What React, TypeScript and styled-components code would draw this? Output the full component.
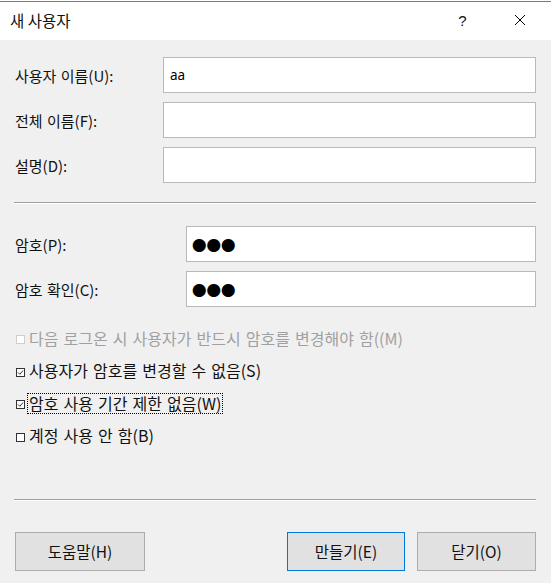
import styled, { createGlobalStyle } from "styled-components";

const Global = createGlobalStyle`
  html, body {
    margin: 0;
    padding: 0;
    background: #f0f0f0;
  }
  body {
    font-family: "Noto Sans CJK KR", "Noto Sans", sans-serif;
    color: #111;
  }
`;

const Window = styled.div`
  width: 551px;
  height: 583px;
  display: flex;
  flex-direction: column;
  background: #f0f0f0;
  overflow: hidden;
`;

const TopEdge = styled.div`
  height: 1px;
  background: #fff;
  border-bottom: 1px solid #7a7a7a;
`;

const TitleBar = styled.div`
  height: 38px;
  background: #fff;
  display: flex;
  align-items: center;
  padding: 0 3px 0 10px;
  font-size: 15.5px;
`;

const Title = styled.span`
  flex: 1;
  margin-top: -2px;
`;

const TitleButton = styled.span`
  width: 57px;
  height: 38px;
  display: flex;
  align-items: center;
  justify-content: center;
  font-family: "Liberation Sans", sans-serif;
  font-size: 15px;
  margin-top: -2px;
`;

const Body = styled.div`
  padding: 17px 15px 0 15px;
  display: flex;
  flex-direction: column;
`;

const Fields = styled.div<{ $labelWidth: number }>`
  display: grid;
  grid-template-columns: ${(p) => p.$labelWidth}px 1fr;
  row-gap: 9px;
  align-items: center;
`;

const Label = styled.label`
  font-size: 15px;
  word-spacing: 1px;
`;

const TextBox = styled.div<{ $dots?: boolean }>`
  height: 36px;
  box-sizing: border-box;
  background: #fff;
  border: 1px solid #b9b9b9;
  display: flex;
  align-items: center;
  padding-left: ${(p) => (p.$dots ? 5 : 6)}px;
  font-family: ${(p) =>
    p.$dots ? `"Noto Sans CJK KR", sans-serif` : `"Noto Sans", sans-serif`};
  font-size: ${(p) => (p.$dots ? 14.5 : 13.5)}px;
  color: #000;
`;

const Separator = styled.div<{ $top: number; $bottom: number }>`
  margin: ${(p) => p.$top}px 0 ${(p) => p.$bottom}px -1px;
  border-top: 1px solid #a0a0a0;
  border-bottom: 1px solid #fff;
`;

const Checks = styled.div`
  display: flex;
  flex-direction: column;
  gap: 10.5px;
  margin-top: 20px;
`;

const CheckRow = styled.div<{ $disabled?: boolean }>`
  height: 22px;
  display: flex;
  align-items: center;
  gap: 2px;
  font-size: 16px;
  word-spacing: 1.5px;
  color: ${(p) => (p.$disabled ? "#a0a0a0" : "#111")};
`;

const Box = styled.span<{ $disabled?: boolean }>`
  width: 9px;
  height: 9px;
  box-sizing: border-box;
  margin: 3px 0 0 1px;
  border: 1px solid ${(p) => (p.$disabled ? "#cfcfcf" : "#333")};
  background: #fff;
  display: flex;
  align-items: center;
  justify-content: center;
  flex: none;
`;

const CheckText = styled.span<{ $focus?: boolean }>`
  padding: 0 1px;
  border: 1px ${(p) => (p.$focus ? "dotted #000" : "solid transparent")};
  line-height: 19px;
`;

const Buttons = styled.div`
  display: flex;
  gap: 12px;
`;

const Spacer = styled.div`
  flex: 1;
`;

const Button = styled.button<{ $w: number; $default?: boolean }>`
  width: ${(p) => p.$w}px;
  height: 39px;
  background: #e1e1e1;
  border: 1px solid ${(p) => (p.$default ? "#0078d7" : "#adadad")};
  font-family: "Noto Sans CJK KR", sans-serif;
  font-size: 15.5px;
  color: #111;
  padding: 0;
`;

function Check({
  label,
  checked,
  disabled,
  focus,
}: {
  label: string;
  checked?: boolean;
  disabled?: boolean;
  focus?: boolean;
}) {
  return (
    <CheckRow $disabled={disabled}>
      <Box $disabled={disabled}>
        {checked && (
          <svg width="7" height="7" viewBox="0 0 7 7">
            <path d="M1 3.5 L2.8 5.3 L6 1.5" fill="none" stroke="#333" strokeWidth="1" />
          </svg>
        )}
      </Box>
      <CheckText $focus={focus}>{label}</CheckText>
    </CheckRow>
  );
}

export default function App() {
  return (
    <Window>
      <Global />
      <TopEdge />
      <TitleBar>
        <Title>새 사용자</Title>
        <TitleButton>?</TitleButton>
        <TitleButton>
          <svg width="12" height="12" viewBox="0 0 12 12">
            <path d="M1 1 L11 11 M11 1 L1 11" stroke="#000" strokeWidth="1" />
          </svg>
        </TitleButton>
      </TitleBar>

      <Body>
        <Fields $labelWidth={148}>
          <Label>사용자 이름(U):</Label>
          <TextBox>aa</TextBox>
          <Label>전체 이름(F):</Label>
          <TextBox />
          <Label>설명(D):</Label>
          <TextBox />
        </Fields>

        <Separator $top={19} $bottom={22} />

        <Fields $labelWidth={171}>
          <Label>암호(P):</Label>
          <TextBox $dots>●●●</TextBox>
          <Label>암호 확인(C):</Label>
          <TextBox $dots>●●●</TextBox>
        </Fields>

        <Checks>
          <Check disabled label="다음 로그온 시 사용자가 반드시 암호를 변경해야 함((M)" />
          <Check checked label="사용자가 암호를 변경할 수 없음(S)" />
          <Check checked focus label="암호 사용 기간 제한 없음(W)" />
          <Check label="계정 사용 안 함(B)" />
        </Checks>

        <Separator $top={52} $bottom={31} />

        <Buttons>
          <Button $w={130}>도움말(H)</Button>
          <Spacer />
          <Button $w={118} $default>
            만들기(E)
          </Button>
          <Button $w={119}>닫기(O)</Button>
        </Buttons>
      </Body>
    </Window>
  );
}
